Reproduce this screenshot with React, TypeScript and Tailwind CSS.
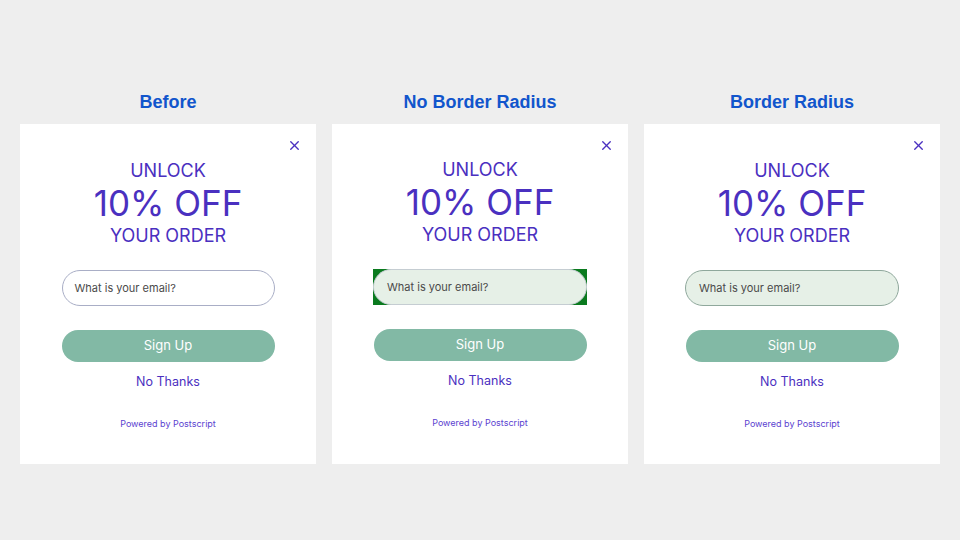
import { X } from "lucide-react";

type Variant = "before" | "square" | "round";

function Popup({ variant }: { variant: Variant }) {
  const shift = variant === "square" ? "pt-[11px]" : "pt-[12px]";

  return (
    <div className={`relative flex h-[340px] w-[296px] flex-col items-center bg-white ${shift} font-['Inter',sans-serif] text-[#4a30c0]`}>
      <button className="absolute right-[14px] top-[14px] text-[#4a30c0]">
        <X size={15} strokeWidth={2.2} />
      </button>

      {/* Headline */}
      <div className="mt-[24px] text-[18px] leading-[22px]">UNLOCK</div>
      <div className="text-[35px] leading-[42px]">10% OFF</div>
      <div className="mt-[1px] text-[18px] leading-[22px]">YOUR ORDER</div>

      {/* Email field */}
      {variant === "before" && (
        <div className="mt-[23px] flex h-[36px] w-[213px] items-center rounded-full border border-[#a9aec6] bg-white pl-[12px] text-[11px] text-[#4a4a4a]">
          What is your email?
        </div>
      )}
      {variant === "square" && (
        <div className="mt-[23px] h-[36px] w-[214px] bg-[#0a7a1e]">
          <div className="flex h-full w-full items-center rounded-full border border-[#c5cdd2] bg-[#e6f0e7] pl-[13px] text-[11px] text-[#4a4a4a]">
            What is your email?
          </div>
        </div>
      )}
      {variant === "round" && (
        <div className="mt-[23px] flex h-[36px] w-[214px] items-center rounded-full border border-[#8fa89c] bg-[#e6f0e7] pl-[13px] text-[11px] text-[#4a4a4a]">
          What is your email?
        </div>
      )}

      {/* Actions */}
      <button className="mt-[24px] flex h-[32px] w-[213px] items-center justify-center rounded-full bg-[#82b9a5] text-[13px] text-white">
        Sign Up
      </button>
      <button className="mt-[12px] text-[12.5px] leading-[16px] text-[#4a30c0]">No Thanks</button>

      <div className="mt-[28px] text-[9px] leading-[12px] text-[#5b3fd0]">Powered by Postscript</div>
    </div>
  );
}

export default function App() {
  const columns: { title: string; variant: Variant }[] = [
    { title: "Before", variant: "before" },
    { title: "No Border Radius", variant: "square" },
    { title: "Border Radius", variant: "round" },
  ];

  return (
    <div className="flex h-[540px] w-[960px] items-start justify-center gap-[16px] bg-[#eeeeee] pt-[91px]">
      {columns.map((col) => (
        <div key={col.title} className="flex flex-col items-center">
          <h2 className="mb-[11px] font-['Liberation_Sans',Arial,sans-serif] text-[18px] font-bold leading-[22px] text-[#1155cc]">
            {col.title}
          </h2>
          <Popup variant={col.variant} />
        </div>
      ))}
    </div>
  );
}
